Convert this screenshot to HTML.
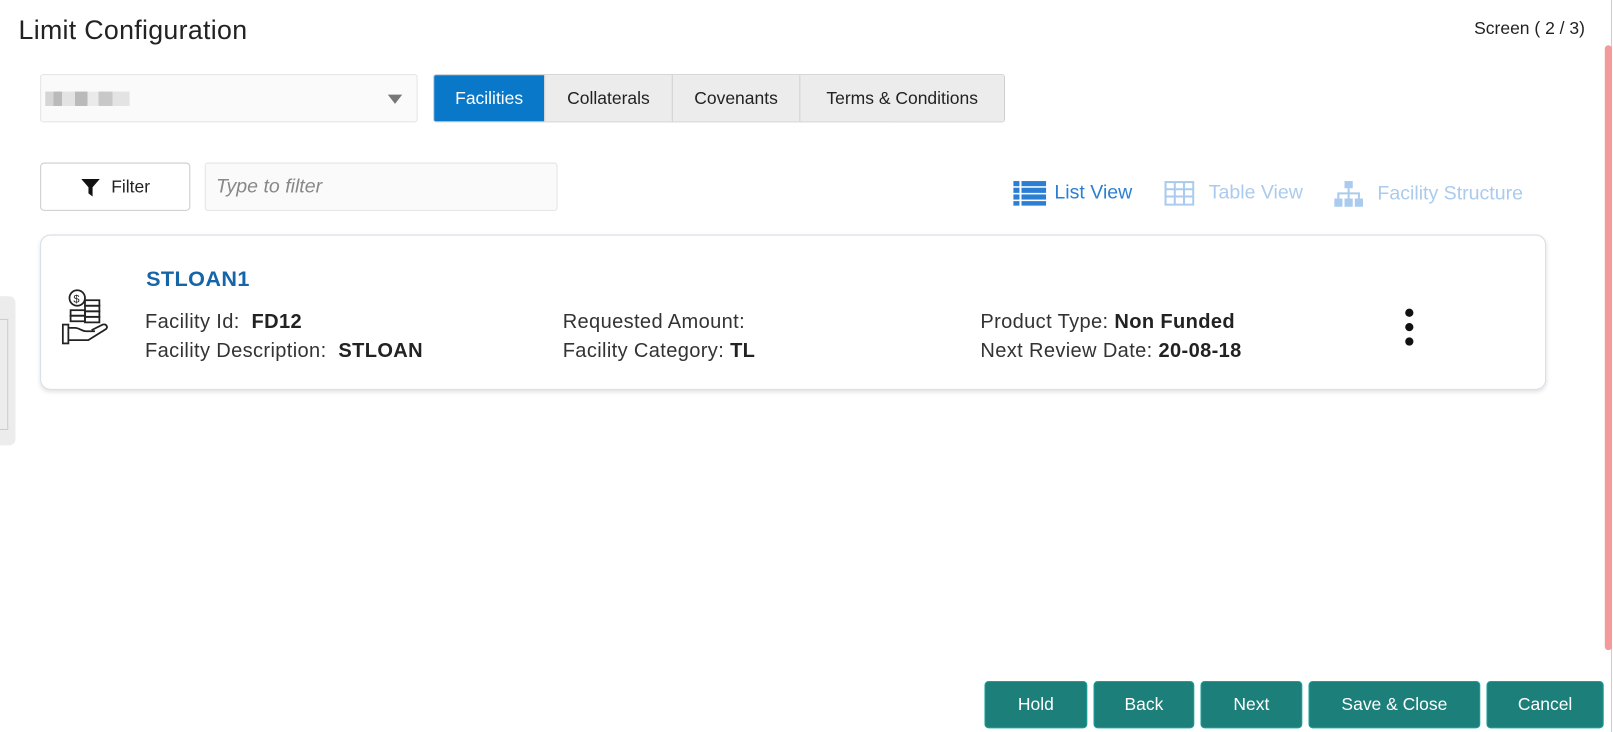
<!DOCTYPE html>
<html><head><meta charset="utf-8"><style>
*{box-sizing:border-box;margin:0;padding:0}
html,body{width:1613px;height:732px;overflow:hidden;background:#fff}
body{font-family:"Liberation Sans",sans-serif;color:#333;position:relative}
#w{position:absolute;left:0;top:0;width:1568px;height:712px;transform:scale(1.02870);transform-origin:0 0}
.abs{position:absolute}
.title{left:18px;top:14px;font-size:26px;color:#222;letter-spacing:.3px}
.scr{left:1433px;top:18px;font-size:17px;color:#222}
.sb{left:1560px;top:44px;width:7px;height:588px;background:#f59a9a;border-radius:4px}
.sbl{left:1566px;top:0;width:1px;height:712px;background:#ccc}
.dd{left:39px;top:72px;width:367px;height:47px;border:1px solid #e4e4e4;border-radius:3px;background:#fafafa}
.blur{left:44px;top:89px;width:82px;height:14px;background:linear-gradient(90deg,#ccc 0 10%,#aaa 10% 20%,#ddd 20% 35%,#aaa 35% 50%,#e6e6e6 50% 63%,#bbb 63% 80%,#ddd 80%);opacity:.8}
.tri{left:377px;top:92px;width:0;height:0;border-left:7px solid transparent;border-right:7px solid transparent;border-top:9px solid #777}
.tabs{left:421px;top:72px;height:47px;display:flex;border:1px solid #d0d0d0;border-radius:3px;overflow:hidden}
.tabs div{height:45px;line-height:45px;font-size:17px;background:#ececec;color:#222;border-left:1px solid #d0d0d0;text-align:center}
.tabs div.on{background:#0a78c8;color:#fff;border-left:none}
.fbtn{left:39px;top:158px;width:146px;height:47px;border:1px solid #ccc;border-radius:4px;font-size:17px;color:#222;display:flex;align-items:center;justify-content:center;gap:10px}
.fin{left:199px;top:158px;width:343px;height:47px;border:1px solid #e4e4e4;border-radius:3px;background:#fafafa;font-style:italic;color:#888;font-size:19px;padding:12px 10px}
.views{top:176px;font-size:19px;display:flex;align-items:center;gap:8px}
.card{left:39px;top:228px;width:1464px;height:151px;border:1px solid #d6dde6;border-radius:10px;box-shadow:0 2px 4px rgba(0,0,0,.12)}
.name{left:142px;top:260px;font-size:21px;font-weight:bold;color:#1565a8;letter-spacing:.4px}
.lbl{font-size:19.5px;color:#333;white-space:nowrap;letter-spacing:.35px}
.lbl b{color:#222}
.dots{left:1366px;top:300px}
.dots i{display:block;width:8px;height:8px;border-radius:50%;background:#111;margin-bottom:6px}
.btn{top:662px;height:46px;background:#1c7f7a;border:1px solid #15a39b;border-radius:4px;color:#fff;font-size:17px;display:flex;align-items:center;justify-content:center}
.ltab{left:0;top:288px;width:15px;height:145px;background:#ececec;border-radius:0 6px 6px 0}
.ltab2{left:0;top:310px;width:8px;height:108px;border:1px solid #ccc;border-left:none}
</style></head><body><div id="w">
<div class="abs sbl"></div>
<div class="abs sb"></div>
<div class="abs ltab"></div><div class="abs ltab2"></div>
<div class="abs title">Limit Configuration</div>
<div class="abs scr">Screen ( 2 / 3)</div>
<div class="abs dd"></div><div class="abs blur"></div><div class="abs tri"></div>
<div class="abs tabs"><div class="on" style="width:107px">Facilities</div><div style="width:124px">Collaterals</div><div style="width:124px">Covenants</div><div style="width:199px">Terms &amp; Conditions</div></div>
<div class="abs fbtn"><svg width="20" height="20" viewBox="0 0 20 20"><path d="M1 2h18l-7 8v9l-4-3v-6z" fill="#111"/></svg>Filter</div>
<div class="abs fin">Type to filter</div>
<div class="abs views" style="left:985px;color:#2a7fd4"><svg width="32" height="24" viewBox="0 0 32 24"><g fill="#2a7fd4"><rect x="0" y="0" width="6" height="5"/><rect x="8" y="0" width="24" height="5"/><rect x="0" y="6.5" width="6" height="5"/><rect x="8" y="6.5" width="24" height="5"/><rect x="0" y="13" width="6" height="5"/><rect x="8" y="13" width="24" height="5"/><rect x="0" y="19.5" width="6" height="4.5"/><rect x="8" y="19.5" width="24" height="4.5"/></g></svg>List View</div>
<div class="abs views" style="left:1132px;color:#aacbee"><svg width="29" height="24" viewBox="0 0 29 24"><rect x="1" y="1" width="27" height="22" fill="none" stroke="#aacbee" stroke-width="2"/><g stroke="#aacbee" stroke-width="2"><path d="M1 8h27M1 15h27M10 1v22M19 1v22"/></g></svg><span style="margin-left:6px">Table View</span></div>
<div class="abs views" style="left:1297px;color:#aacbee"><svg width="28" height="26" viewBox="0 0 28 26"><g fill="#aacbee"><rect x="10" y="0" width="8" height="7"/><rect x="0" y="17" width="8" height="8"/><rect x="10" y="17" width="8" height="8"/><rect x="20" y="17" width="8" height="8"/><path d="M13 7h2v4h10v6h-2v-4H15v4h-2v-4H5v4H3v-6h10z"/></g></svg><span style="margin-left:6px">Facility Structure</span></div>
<div class="abs card"></div>
<svg class="abs" style="left:60px;top:280px" width="56" height="56" viewBox="0 0 52 52" fill="none" stroke="#222" stroke-width="1.6"><circle cx="14" cy="9" r="7"/><text x="10.5" y="13" font-size="10" fill="#222" stroke="none" font-family="Liberation Sans">$</text><rect x="21" y="11" width="13" height="5"/><rect x="21" y="16" width="13" height="5"/><rect x="8" y="20" width="13" height="5"/><rect x="21" y="21" width="13" height="5"/><rect x="8" y="25" width="13" height="5"/><rect x="21" y="26" width="13" height="5"/><rect x="1" y="33" width="5" height="17"/><path d="M6 36h6c4 0 6 3 10 3h8M6 47h18l16-10c2-2 0-5-3-4l-10 5"/></svg>
<div class="abs name">STLOAN1</div>
<div class="abs lbl" style="left:141px;top:302px">Facility Id:&nbsp; <b>FD12</b></div>
<div class="abs lbl" style="left:141px;top:330px">Facility Description:&nbsp; <b>STLOAN</b></div>
<div class="abs lbl" style="left:547px;top:302px">Requested Amount:</div>
<div class="abs lbl" style="left:547px;top:330px">Facility Category:&nbsp;<b>TL</b></div>
<div class="abs lbl" style="left:953px;top:302px">Product Type:&nbsp;<b>Non Funded</b></div>
<div class="abs lbl" style="left:953px;top:330px">Next Review Date:&nbsp;<b>20-08-18</b></div>
<div class="abs dots"><i></i><i></i><i></i></div>
<div class="abs btn" style="left:957px;width:100px">Hold</div>
<div class="abs btn" style="left:1063px;width:98px">Back</div>
<div class="abs btn" style="left:1167px;width:99px">Next</div>
<div class="abs btn" style="left:1272px;width:167px">Save &amp; Close</div>
<div class="abs btn" style="left:1445px;width:114px">Cancel</div>
</div></body></html>
